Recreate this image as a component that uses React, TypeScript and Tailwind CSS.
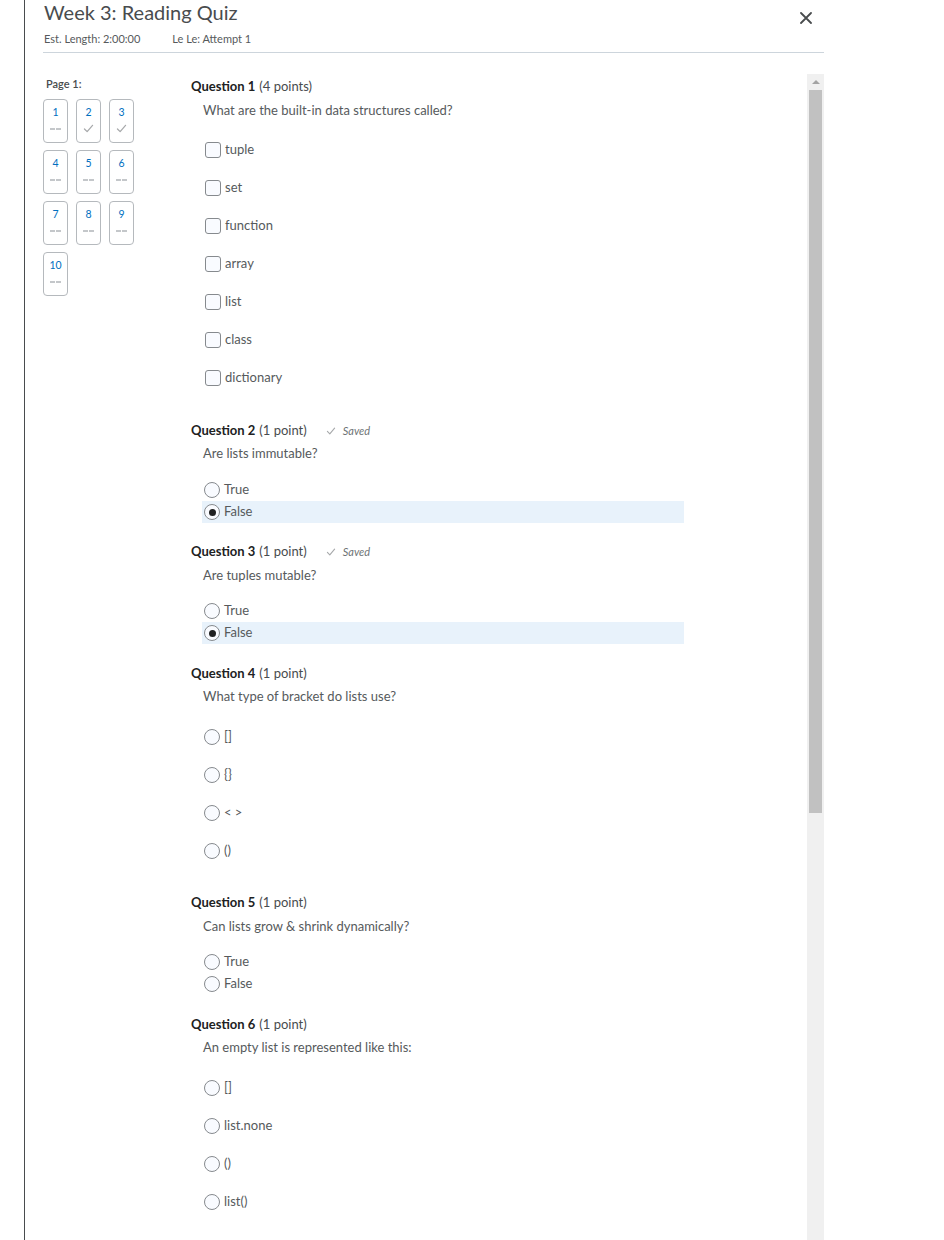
import React from "react";

const Check = ({ className = "" }: { className?: string }) => (
  <svg viewBox="0 0 12 10" className={className} fill="none" stroke="currentColor" strokeWidth="1.4" strokeLinecap="round" strokeLinejoin="round">
    <path d="M1.5 5.5 L4.5 8.5 L10.5 1.5" />
  </svg>
);

const NavBox = ({ n, saved }: { n: number; saved?: boolean }) => (
  <div className="w-[25px] h-[44px] border border-[#b5b9bd] rounded-[4px] flex flex-col items-center pt-[4px]">
    <span className="text-[10.5px] leading-[16px] text-[#006fbf]">{n}</span>
    {saved ? (
      <Check className="w-[11px] h-[9px] text-[#a7a9ab] mt-[4px]" />
    ) : (
      <span className="flex gap-[1px] mt-[8px]">
        <span className="w-[5px] h-[2px] bg-[#c4c7ca]" />
        <span className="w-[5px] h-[2px] bg-[#c4c7ca]" />
      </span>
    )}
  </div>
);

const CheckboxOpt = ({ label }: { label: string }) => (
  <div className="h-[22px] flex items-center pl-[2px]">
    <span className="w-[16px] h-[16px] border border-[#868a8e] rounded-[3px] bg-[#f9fbff] mr-[4px]" />
    <span className="text-[13px] text-[#565a5c]">{label}</span>
  </div>
);

const RadioOpt = ({ label, checked, highlight }: { label: string; checked?: boolean; highlight?: boolean }) => (
  <div className={`h-[22px] flex items-center pl-[2px] w-[482px] ${highlight ? "bg-[#e8f2fb]" : ""}`}>
    <span className="w-[16px] h-[16px] border border-[#868a8e] rounded-full bg-[#f9fbff] mr-[4px] flex items-center justify-center">
      {checked && <span className="w-[7px] h-[7px] rounded-full bg-[#202122]" />}
    </span>
    <span className="text-[13px] text-[#565a5c]">{label}</span>
  </div>
);

const QHeader = ({ n, pts, saved }: { n: number; pts: string; saved?: boolean }) => (
  <div className="h-[18px] flex items-center text-[13px] text-[#202122]">
    <span className="font-bold">Question {n}</span>
    <span className="ml-[4px] text-[#494c4e]">({pts})</span>
    {saved && (
      <span className="ml-[19px] flex items-center text-[11px] italic text-[#6e7376]">
        <Check className="w-[10px] h-[8px] text-[#a7a9ab] mr-[7px]" />
        Saved
      </span>
    )}
  </div>
);

const QText = ({ children, mt }: { children: React.ReactNode; mt: string }) => (
  <div className={`h-[16px] flex items-center pl-[12px] text-[13px] text-[#565a5c] ${mt}`}>{children}</div>
);

export default function App() {
  return (
    <div className="w-[944px] h-[1240px] overflow-hidden bg-white font-['Lato','Noto_Sans',sans-serif]">
      <div className="ml-[24px] h-[1240px] border-l border-[#494c4e] pl-[18px] w-[800px] flex flex-col">
        {/* header */}
        <div className="flex justify-between pr-[12px]">
          <div className="pl-[1px]">
            <div className="text-[20px] leading-[24px] text-[#494c4e]">Week 3: Reading Quiz</div>
            <div className="flex text-[11px] leading-[14px] text-[#565a5c] mt-[8px]">
              <span>Est. Length: 2:00:00</span>
              <span className="ml-[32px]">Le Le: Attempt 1</span>
            </div>
          </div>
          <svg viewBox="0 0 12 12" className="w-[12px] h-[12px] mt-[12px]" stroke="#494c4e" strokeWidth="1.8" strokeLinecap="round">
            <path d="M1 1 L11 11 M11 1 L1 11" />
          </svg>
        </div>
        <div className="h-px bg-[#cdd5dc] mt-[6px]" />

        {/* body */}
        <div className="flex mt-[21px] flex-1">
          {/* nav */}
          <div className="w-[148px] pt-[3px]">
            <div className="pl-[3px] text-[11px] leading-[14px] font-semibold text-[#494c4e]">Page 1:</div>
            <div className="grid grid-cols-[25px_25px_25px] gap-x-[8px] gap-y-[7px] mt-[8px]">
              <NavBox n={1} />
              <NavBox n={2} saved />
              <NavBox n={3} saved />
              <NavBox n={4} />
              <NavBox n={5} />
              <NavBox n={6} />
              <NavBox n={7} />
              <NavBox n={8} />
              <NavBox n={9} />
              <NavBox n={10} />
            </div>
          </div>

          {/* questions */}
          <div className="flex-1 pt-[4px]">
            <QHeader n={1} pts="4 points" />
            <QText mt="mt-[7px]">What are the built-in data structures called?</QText>
            <div className="pl-[12px] mt-[20px] flex flex-col gap-[16px]">
              {["tuple", "set", "function", "array", "list", "class", "dictionary"].map((o) => (
                <CheckboxOpt key={o} label={o} />
              ))}
            </div>

            <div className="mt-[33px]">
              <QHeader n={2} pts="1 point" saved />
            </div>
            <QText mt="mt-[6px]">Are lists immutable?</QText>
            <div className="pl-[11px] mt-[17px] flex flex-col">
              <RadioOpt label="True" />
              <RadioOpt label="False" checked highlight />
            </div>

            <div className="mt-[20px]">
              <QHeader n={3} pts="1 point" saved />
            </div>
            <QText mt="mt-[7px]">Are tuples mutable?</QText>
            <div className="pl-[11px] mt-[16px] flex flex-col">
              <RadioOpt label="True" />
              <RadioOpt label="False" checked highlight />
            </div>

            <div className="mt-[21px]">
              <QHeader n={4} pts="1 point" />
            </div>
            <QText mt="mt-[6px]">What type of bracket do lists use?</QText>
            <div className="pl-[11px] mt-[21px] flex flex-col gap-[16px]">
              {["[]", "{}", "< >", "()"].map((o) => (
                <RadioOpt key={o} label={o} />
              ))}
            </div>

            <div className="mt-[32px]">
              <QHeader n={5} pts="1 point" />
            </div>
            <QText mt="mt-[7px]">Can lists grow &amp; shrink dynamically?</QText>
            <div className="pl-[11px] mt-[16px] flex flex-col">
              <RadioOpt label="True" />
              <RadioOpt label="False" />
            </div>

            <div className="mt-[21px]">
              <QHeader n={6} pts="1 point" />
            </div>
            <QText mt="mt-[6px]">An empty list is represented like this:</QText>
            <div className="pl-[11px] mt-[21px] flex flex-col gap-[16px]">
              {["[]", "list.none", "()", "list()"].map((o) => (
                <RadioOpt key={o} label={o} />
              ))}
            </div>
          </div>

          {/* scrollbar */}
          <div className="w-[17px] bg-[#f0f0f0] flex flex-col items-center">
            <div className="h-[16px] flex items-center justify-center">
              <span className="w-0 h-0 border-l-[4px] border-r-[4px] border-b-[4px] border-l-transparent border-r-transparent border-b-[#a3a3a3]" />
            </div>
            <div className="w-[13px] h-[723px] bg-[#c1c1c1]" />
          </div>
        </div>
      </div>
    </div>
  );
}
